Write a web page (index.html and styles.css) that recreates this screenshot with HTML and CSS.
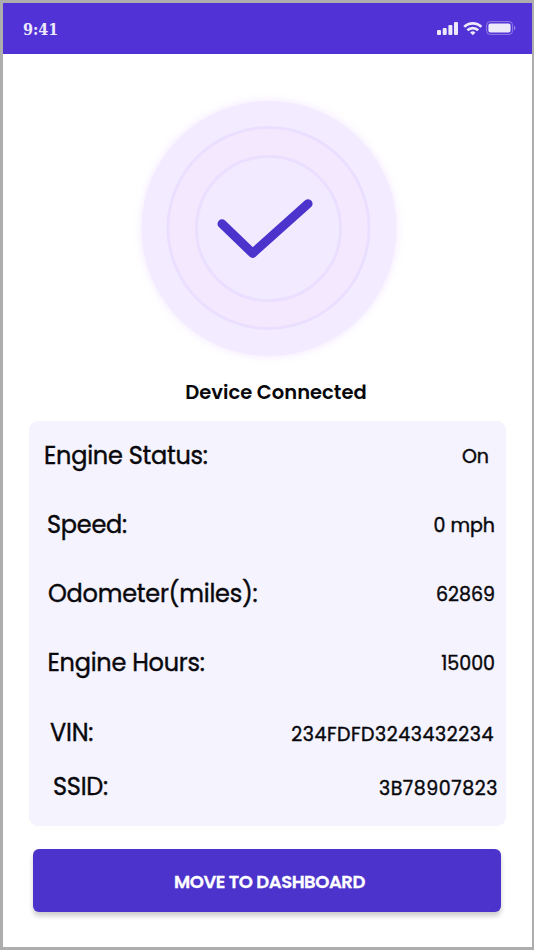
FILE: index.html
```html
<!doctype html>
<html>
<head>
<meta charset="utf-8">
<title>Device Connected</title>
<link rel="stylesheet" href="styles.css">
</head>

<body>
	<div class="screen">
		<div class="status-bar">
			<span class="time">9:41</span>
			<svg class="status-icons" width="80" height="16" viewBox="0 0 80 16" fill="#ece9fb">
				<rect x="0" y="9" width="4" height="5" rx="1"/>
				<rect x="5.7" y="7" width="4" height="7" rx="1"/>
				<rect x="11.4" y="4" width="4" height="10" rx="1"/>
				<rect x="17" y="1" width="4" height="13" rx="1"/>
				<g fill="none" stroke="#ece9fb" stroke-width="2.7">
					<path d="M27.2 5.9a12.2 12.2 0 0 1 17.2 0"/>
					<path d="M30.4 9.2a7.8 7.8 0 0 1 10.8 0"/>
				</g>
				<path d="M35.8 14.3l-2.7-2.8a4 4 0 0 1 5.4 0z"/>
				<rect x="49.6" y=".6" width="26" height="12.8" rx="3.6" fill="none" stroke="#ece9fb" stroke-opacity=".4"/>
				<rect x="51.4" y="2.4" width="22.2" height="9.2" rx="2"/>
				<path d="M77 4.8v4.4a2.4 2.4 0 0 0 0-4.4z" opacity=".45"/>
			</svg>
		</div>
		<div class="connected">
			<svg class="badge" width="276" height="276" viewBox="0 0 276 276">
				<circle class="glow" cx="138" cy="137.5" r="128"/>
				<circle class="outer" cx="138" cy="137.5" r="127.5"/>
				<circle class="middle" cx="137.5" cy="137" r="100.5"/>
				<circle class="inner" cx="137.5" cy="137.5" r="72"/>
				<path class="check" d="M91 132.8l30.6 29.5 55.5-49.6"/>
			</svg>
			<h1>Device Connected</h1>
		</div>
		<ul class="info">
			<li class="engine"><span class="name">Engine Status:</span><span class="value">On</span></li>
			<li class="speed"><span class="name">Speed:</span><span class="value">0 mph</span></li>
			<li class="odometer"><span class="name">Odometer(miles):</span><span class="value">62869</span></li>
			<li class="hours"><span class="name">Engine Hours:</span><span class="value">15000</span></li>
			<li class="vin"><span class="name">VIN:</span><span class="value">234FDFD3243432234</span></li>
			<li class="ssid"><span class="name">SSID:</span><span class="value">3B78907823</span></li>
		</ul>
		<button class="move-btn">MOVE TO DASHBOARD</button>
	</div>
</body>
</html>
```
FILE: styles.css
```css
*{margin:0; padding:0; box-sizing:border-box; list-style:none;}
body{background:#fff; color:#08080c; font-family:Poppins,Inter,"Liberation Sans",sans-serif;}
.screen{width:534px; height:950px; border:3px solid #adadad; border-right-width:2.5px; background:#fff; display:flex; flex-direction:column; overflow:hidden;}

.status-bar{height:51px; flex:none; padding:0 15px 0 20px; background:#5032d6; display:flex; align-items:center; justify-content:space-between;}
.time{font:bold 16px "DejaVu Serif Condensed","DejaVu Serif",serif; font-stretch:condensed; color:#ece9fb; padding-top:2px;}
.status-icons{display:block;}

.connected{display:flex; flex-direction:column; align-items:center; padding-top:36.5px; height:367px; flex:none;}
.badge{display:block; flex:none; margin-left:2px;}
.glow{fill:#f3e9ff; filter:blur(4px);}
.outer{fill:#f3ebff;}
.middle{fill:#f4e8ff; stroke:#ebdfff; stroke-width:3;}
.inner{fill:#f2eaff; stroke:#ebdfff; stroke-width:3;}
.check{fill:none; stroke:#4c33cc; stroke-width:9; stroke-linecap:round; stroke-linejoin:round;}
h1{font-size:19.5px; line-height:28px; font-weight:600; margin:12px 0 0 17px; white-space:nowrap;}

.info{width:477px; height:405px; flex:none; margin-left:26px; border-radius:9px; background:#f5f3fd;}
.info li{height:69px; display:flex; align-items:center; justify-content:space-between; font-weight:400; white-space:nowrap; -webkit-text-stroke:.4px #08080c;}
.name{font-size:24px; letter-spacing:-.25px;}
.value{font-size:19px; padding-top:2px;}
.engine{padding:0 17px 0 15px;}
.speed{padding:0 11px 0 18px;}
.odometer{padding:0 11px 0 19px;}
.hours{padding:0 11px 0 18.5px;}
.info .vin{padding:2px 12px 0 21px;}
.info .ssid{height:41px; padding:0 8px 0 24px;}
.vin .value,.ssid .value{letter-spacing:.55px;}
.vin .value{padding-top:3px;}
.ssid .value{padding-top:3px;}

.move-btn{width:468px; height:63px; flex:none; margin:23px 0 0 29.5px; padding:1px 0 0 6px; border:0; border-radius:6px; background:#4c33cc; box-shadow:0 4px 5px rgba(0,0,0,.2); color:#fff; font-family:inherit; font-size:18px; font-weight:600; letter-spacing:-.45px; -webkit-text-stroke:.3px #fff;}
```
